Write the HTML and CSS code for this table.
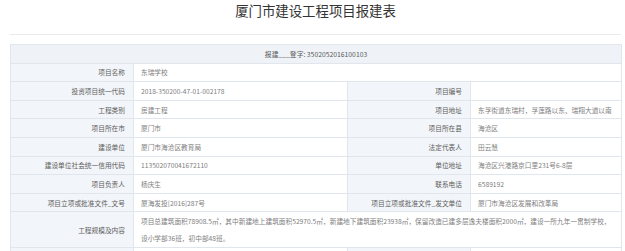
FILE: index.html
```html
<!DOCTYPE html>
<html lang="zh-CN">
<head>
<meta charset="utf-8">
<title>厦门市建设工程项目报建表</title>
<link rel="stylesheet" href="styles.css">
</head>
<body>
<div class="page">
  <h1 class="title">厦门市建设工程项目报建表</h1>
  <table class="form">
    <colgroup>
      <col class="c-label">
      <col class="c-value1">
      <col class="c-label">
      <col class="c-value2">
    </colgroup>
    <tr class="row">
      <td class="head" colspan="4">报建___登字: 3502052016100103</td>
    </tr>
    <tr class="row">
      <td class="label">项目名称</td>
      <td class="value" colspan="3">东瑞学校</td>
    </tr>
    <tr class="row">
      <td class="label">投资项目统一代码</td>
      <td class="value">2018-350200-47-01-002178</td>
      <td class="label">项目编号</td>
      <td class="value"></td>
    </tr>
    <tr class="row">
      <td class="label">工程类别</td>
      <td class="value">房建工程</td>
      <td class="label">项目地址</td>
      <td class="value">东孚街道东瑞村，孚莲路以东、瑞翔大道以南</td>
    </tr>
    <tr class="row">
      <td class="label">项目所在市</td>
      <td class="value">厦门市</td>
      <td class="label">项目所在县</td>
      <td class="value">海沧区</td>
    </tr>
    <tr class="row">
      <td class="label">建设单位</td>
      <td class="value">厦门市海沧区教育局</td>
      <td class="label">法定代表人</td>
      <td class="value">田云慧</td>
    </tr>
    <tr class="row">
      <td class="label">建设单位社会统一信用代码</td>
      <td class="value">113502070041672110</td>
      <td class="label">单位地址</td>
      <td class="value">海沧区兴港路京口里231号6-8层</td>
    </tr>
    <tr class="row">
      <td class="label">项目负责人</td>
      <td class="value">杨庆生</td>
      <td class="label">联系电话</td>
      <td class="value">6589192</td>
    </tr>
    <tr class="row">
      <td class="label">项目立项或批准文件_文号</td>
      <td class="value">厦海发投[2016]287号</td>
      <td class="label">项目立项或批准文件_发文单位</td>
      <td class="value">厦门市海沧区发展和改革局</td>
    </tr>
    <tr class="row-tall">
      <td class="label">工程规模及内容</td>
      <td class="value multi" colspan="3">项目总建筑面积78908.5㎡，其中新建地上建筑面积52970.5㎡，新建地下建筑面积23938㎡，保留改造已建多层逸夫楼面积2000㎡，建设一所九年一贯制学校，<br>设小学部36班，初中部48班。</td>
    </tr>
    <tr class="row">
      <td class="label"></td>
      <td class="value"></td>
      <td class="label"></td>
      <td class="value"></td>
    </tr>
  </table>
</div>
</body>
</html>
```

FILE: styles.css
```css
html, body {
  margin: 0;
  padding: 0;
  background: #ffffff;
}

body {
  font-family: "Noto Sans CJK SC", "Liberation Sans", sans-serif;
  color: #666666;
}

.page {
  padding: 0 4px 0 10px;
}

.title {
  margin: 0;
  height: 34px;
  line-height: 20px;
  font-size: 13.4px;
  font-weight: normal;
  text-align: center;
  color: #333333;
  border-bottom: 1px solid #ebebeb;
}

.form {
  margin-top: 9px;
  width: 100%;
  border-collapse: collapse;
  table-layout: fixed;
  font-size: 6.7px;
}

.c-label {
  width: 123px;
}

.c-value1 {
  width: 214px;
}

.c-value2 {
  width: 151px;
}

.form td {
  border: 1px solid #e1e6ec;
  padding: 0;
  vertical-align: middle;
  white-space: nowrap;
  overflow: hidden;
}

.row td {
  height: 17.6px;
  line-height: 10px;
}

.row-tall td {
  height: 35px;
}

.head {
  background: #eff3f8;
  text-align: center;
  color: #5a5a5a;
  font-size: 6.8px;
}

.label {
  background: #f2f5f9;
  text-align: right;
  padding-right: 8px !important;
  color: #5e5e5e;
}

.value {
  text-align: left;
  padding-left: 7px !important;
  color: #808080;
}

.value.multi {
  line-height: 17px;
  white-space: normal;
}
```
